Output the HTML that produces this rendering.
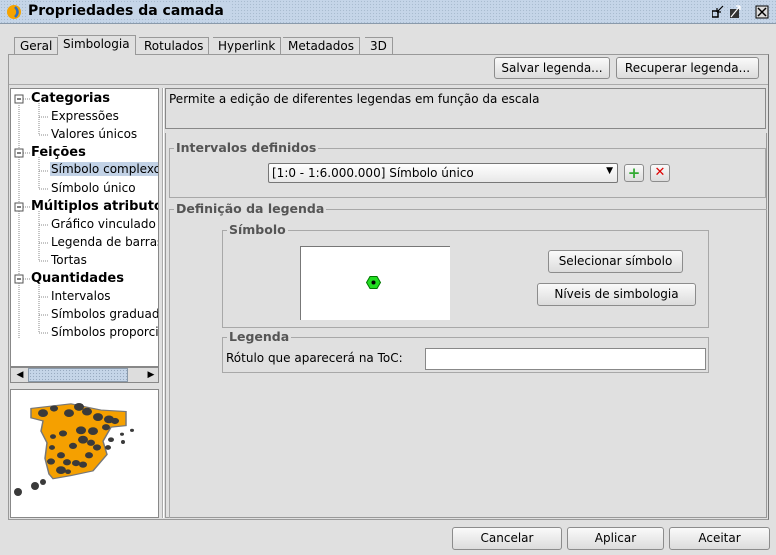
<!DOCTYPE html>
<html><head><meta charset="utf-8"><style>
*{box-sizing:border-box;margin:0;padding:0}
body{width:776px;height:555px;background:#e0e0e0;font-family:"DejaVu Sans","Liberation Sans",sans-serif;font-size:12px;color:#000;position:relative;overflow:hidden}
.a{position:absolute}
.title{left:0;top:0;width:776px;height:24px;background-color:#c5d5e8;background-image:radial-gradient(#a9bccf 0.6px,transparent 0.8px);background-size:3px 3px;border-bottom:1px solid #8a9aab}
.title span{position:absolute;left:28px;top:3px;font-weight:bold;font-size:14px;background:#c5d5e8;padding-right:6px}
.btn{position:absolute;border:1px solid #8c8c8c;border-radius:3px;background:linear-gradient(#fafafa,#dcdcdc);text-align:center;line-height:20px;font-size:12px}
.tab{position:absolute;top:37px;height:17px;font-size:12px;line-height:16px;padding:0 5px;border-top:1px solid #999;border-right:1px solid #999}
.fs{position:absolute;border:1px solid #a8a8a8}
.lg{position:absolute;top:-9px;left:4px;background:#e0e0e0;padding:0 2px;font-weight:bold;color:#555;font-size:12.5px}
.tree div{position:absolute;white-space:nowrap}
.b{font-weight:bold;font-size:13px}
</style></head><body>
<div class="a title"><span>Propriedades da camada</span>
<svg class="a" style="left:6px;top:4px" width="16" height="16"><circle cx="8" cy="8" r="7" fill="#f5a300"/><path d="M9 3 Q14 8 9 13" stroke="#3070c0" stroke-width="2.5" fill="none"/></svg>
<svg class="a" style="left:712px;top:4px" width="60" height="16"><rect x="0" y="7" width="6" height="6" fill="none" stroke="#000" stroke-width="1.5"/><path d="M5 8 L11 2 M5 8 V4 M5 8 H9" stroke="#000" stroke-width="1.2" fill="none"/><rect x="18" y="5" width="9" height="9" fill="#333"/><path d="M19 13 L28 2 M28 2 H24 M28 2 V6" stroke="#fff" stroke-width="1.2"/><rect x="44" y="2" width="12" height="12" fill="#ddd" stroke="#000"/><path d="M46 4 L54 12 M54 4 L46 12" stroke="#000" stroke-width="1.5"/></svg>
</div>
<div class="tab" style="left:14px;border-left:1px solid #999">Geral</div>
<div class="tab" style="left:58px;top:35px;height:20px;background:#e0e0e0;z-index:2">Simbologia</div>
<div class="tab" style="left:139px">Rotulados</div>
<div class="tab" style="left:213px">Hyperlink</div>
<div class="tab" style="left:283px">Metadados</div>
<div class="tab" style="left:365px">3D</div>
<div class="a" style="left:8px;top:54px;width:761px;height:466px;border:1px solid #999;border-right-color:#777"></div>
<div class="btn" style="left:494px;top:57px;width:116px;height:22px">Salvar legenda...</div>
<div class="btn" style="left:616px;top:57px;width:143px;height:22px">Recuperar legenda...</div>
<div class="a" style="left:9px;top:84px;width:759px;height:1px;background:#aaa"></div>
<!-- tree -->
<div class="a tree" style="left:10px;top:88px;width:149px;height:279px;background:#fff;border:1px solid #888;overflow:hidden">
<svg class="a" style="left:0;top:0" width="60" height="260"><g stroke="#888" stroke-dasharray="1 1" fill="none"><path d="M8 16 V250"/><path d="M28 14 V46 M28 28 H38 M28 46 H38"/><path d="M28 68 V100 M28 82 H38 M28 100 H38"/><path d="M28 122 V172 M28 136 H38 M28 154 H38 M28 172 H38"/><path d="M28 194 V244 M28 208 H38 M28 226 H38 M28 244 H38"/><path d="M12 10 H20 M12 64 H20 M12 118 H20 M12 190 H20"/></g>
<g fill="#fff" stroke="#555"><rect x="4" y="6" width="8" height="8"/><rect x="4" y="60" width="8" height="8"/><rect x="4" y="114" width="8" height="8"/><rect x="4" y="186" width="8" height="8"/></g><g stroke="#000"><path d="M6 10H10M6 64H10M6 118H10M6 190H10"/></g></svg>
<div class="b" style="left:20px;top:2px">Categorias</div>
<div style="left:40px;top:20px">Expressões</div>
<div style="left:40px;top:38px">Valores únicos</div>
<div class="b" style="left:20px;top:56px">Feições</div>
<div style="left:39px;top:73px;background:#c2d2e6;padding:0 1px;width:120px">Símbolo complexo</div>
<div style="left:40px;top:92px">Símbolo único</div>
<div class="b" style="left:20px;top:110px">Múltiplos atributos</div>
<div style="left:40px;top:128px">Gráfico vinculado</div>
<div style="left:40px;top:146px">Legenda de barras</div>
<div style="left:40px;top:164px">Tortas</div>
<div class="b" style="left:20px;top:182px">Quantidades</div>
<div style="left:40px;top:200px">Intervalos</div>
<div style="left:40px;top:218px">Símbolos graduados</div>
<div style="left:40px;top:236px">Símbolos proporcionais</div>
</div>
<div class="a" style="left:10px;top:367px;width:149px;height:16px;background:#ddd;border:1px solid #888">
<div class="a" style="left:2px;top:1px;width:14px;height:12px;text-align:center;font-size:9px;line-height:12px">◀</div>
<div class="a" style="left:17px;top:0;width:100px;height:14px;background-color:#c5d5e8;background-image:radial-gradient(#98aac0 0.6px,transparent 0.8px);background-size:3px 3px;border:1px solid #8a9aab"></div>
<div class="a" style="left:133px;top:1px;width:14px;height:12px;text-align:center;font-size:9px;line-height:12px">▶</div></div>
<div class="a" style="left:10px;top:389px;width:149px;height:129px;background:#fff;border:1px solid #888">
<svg width="147" height="127"><g transform="translate(0,6) scale(1,0.78)"><path d="M20 16 L60 10 L90 18 L115 20 L115 38 L100 40 L92 58 L96 75 L82 96 L60 102 L42 106 L38 100 L34 80 L36 60 L30 45 L32 32 L20 28 Z" fill="#f5a000" stroke="#777" stroke-width="1.5"/>
<g fill="#3a3a3a"><circle cx="32" cy="22" r="5"/><circle cx="43" cy="16" r="4"/><circle cx="58" cy="22" r="5"/><circle cx="68" cy="14" r="5"/><circle cx="76" cy="20" r="5"/><circle cx="87" cy="27" r="5"/><circle cx="98" cy="30" r="5"/><circle cx="104" cy="32" r="4"/><circle cx="95" cy="40" r="4"/><circle cx="82" cy="45" r="5"/><circle cx="70" cy="44" r="5"/><circle cx="72" cy="56" r="5"/><circle cx="80" cy="60" r="4"/><circle cx="86" cy="66" r="4"/><circle cx="78" cy="76" r="4"/><circle cx="62" cy="64" r="4"/><circle cx="52" cy="48" r="4"/><circle cx="42" cy="52" r="3"/><circle cx="41" cy="66" r="3"/><circle cx="50" cy="76" r="4"/><circle cx="56" cy="85" r="4"/><circle cx="65" cy="86" r="4"/><circle cx="72" cy="88" r="4"/><circle cx="40" cy="84" r="4"/><circle cx="50" cy="95" r="5"/><circle cx="57" cy="97" r="3"/><circle cx="100" cy="56" r="3"/><circle cx="111" cy="49" r="2"/><circle cx="121" cy="44" r="2"/><circle cx="97" cy="66" r="3"/></g></g>
<g fill="#3a3a3a"><circle cx="32" cy="92" r="3"/><circle cx="24" cy="96" r="4"/><circle cx="7" cy="102" r="4"/><circle cx="112" cy="52" r="2"/></g></svg></div>
<div class="a" style="left:162px;top:88px;width:2px;height:430px;border-left:1px solid #aaa;border-right:1px solid #fff"></div>
<!-- right -->
<div class="a" style="left:165px;top:88px;width:601px;height:41px;border:1px solid #888;padding:3px 3px">Permite a edição de diferentes legendas em função da escala</div>
<div class="a" style="left:165px;top:133px;width:602px;height:385px;border-left:1px solid #999;border-right:1px solid #999;border-bottom:1px solid #999"></div>
<div class="fs" style="left:169px;top:148px;width:597px;height:50px"><div class="lg">Intervalos definidos</div></div>
<div class="a" style="left:268px;top:163px;width:350px;height:20px;background:linear-gradient(#fff,#e8e8e8);border:1px solid #777;border-radius:2px;padding:2px 3px">[1:0 - 1:6.000.000] Símbolo único<span style="position:absolute;right:4px;top:2px;font-size:9px">▼</span></div>
<div class="btn" style="left:624px;top:164px;width:20px;height:18px;line-height:16px;color:#3a3;font-weight:bold;font-size:15px">+</div>
<div class="btn" style="left:650px;top:164px;width:20px;height:18px;line-height:16px;color:#d00;font-weight:bold;font-size:13px">✕</div>
<div class="fs" style="left:169px;top:209px;width:598px;height:309px;border-bottom:none;border-right:none"><div class="lg">Definição da legenda</div></div>
<div class="fs" style="left:222px;top:230px;width:487px;height:98px"><div class="lg">Símbolo</div></div>
<div class="a" style="left:300px;top:246px;width:150px;height:74px;background:#fff;border-top:1px solid #777;border-left:1px solid #777"></div>
<svg class="a" style="left:366px;top:275px" width="16" height="16"><polygon points="4,1.5 11,1.5 14.5,7.5 11,13.5 4,13.5 0.5,7.5" fill="#2d2" stroke="#070"/><circle cx="7.5" cy="7.5" r="2" fill="#000"/></svg>
<div class="btn" style="left:548px;top:250px;width:135px;height:23px">Selecionar símbolo</div>
<div class="btn" style="left:537px;top:283px;width:159px;height:23px">Níveis de simbologia</div>
<div class="fs" style="left:222px;top:337px;width:487px;height:36px"><div class="lg">Legenda</div></div>
<div class="a" style="left:226px;top:351px">Rótulo que aparecerá na ToC:</div>
<div class="a" style="left:425px;top:348px;width:281px;height:22px;background:#fff;border:1px solid #888"></div>
<div class="btn" style="left:452px;top:527px;width:110px;height:23px">Cancelar</div>
<div class="btn" style="left:567px;top:527px;width:97px;height:23px">Aplicar</div>
<div class="btn" style="left:669px;top:527px;width:101px;height:23px">Aceitar</div>
</body></html>
